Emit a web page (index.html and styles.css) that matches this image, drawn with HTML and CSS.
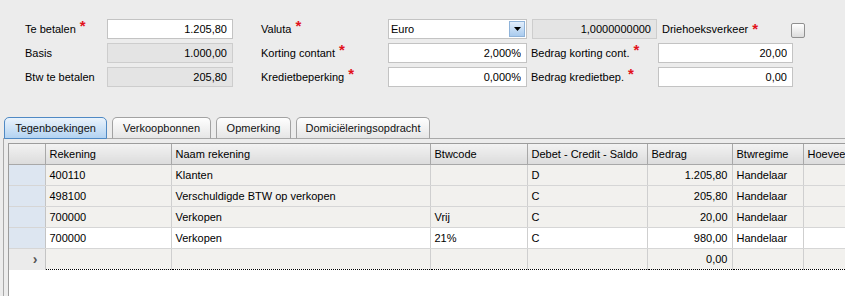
FILE: index.html
```html
<!DOCTYPE html>
<html lang="nl">
<head>
  <meta charset="UTF-8" />
  <title>Verkoopfactuur - Betaling</title>
  <link rel="stylesheet" href="styles.css">
</head>
<body>
  <div class="form">
    <label class="c1">Te betalen <span class="req">*</span></label>
    <input class="c2" type="text" value="1.205,80" />
    <label class="c4">Valuta <span class="req">*</span></label>
    <div class="c5 select">
      <span class="select-text">Euro</span>
      <span class="drop">
        <svg width="7" height="4" viewBox="0 0 7 4"><path d="M0 0H7L3.5 4Z" fill="#000"/></svg>
      </span>
    </div>
    <input class="c7 ro" type="text" value="1,0000000000" readonly />
    <div class="c9 wide">
      <label>Driehoeksverkeer <span class="req">*</span></label>
      <span class="checkbox"></span>
    </div>

    <label class="c1">Basis</label>
    <input class="c2 ro" type="text" value="1.000,00" readonly />
    <label class="c4">Korting contant <span class="req">*</span></label>
    <input class="c5" type="text" value="2,000%" />
    <label class="c7 tight">Bedrag korting cont. <span class="req">*</span></label>
    <input class="c9" type="text" value="20,00" />

    <label class="c1">Btw te betalen</label>
    <input class="c2 ro" type="text" value="205,80" readonly />
    <label class="c4">Kredietbeperking <span class="req">*</span></label>
    <input class="c5" type="text" value="0,000%" />
    <label class="c7 tight">Bedrag kredietbep. <span class="req">*</span></label>
    <input class="c9" type="text" value="0,00" />
  </div>

  <div class="tabs">
    <div class="tab active t1">Tegenboekingen</div>
    <div class="tab t2">Verkoopbonnen</div>
    <div class="tab t3">Opmerking</div>
    <div class="tab t4">Domiciëleringsopdracht</div>
  </div>

  <div class="panel">
    <div class="grid">
      <table>
        <colgroup>
          <col style="width:36px"><col style="width:126px"><col style="width:259px"><col style="width:97px">
          <col style="width:120px"><col style="width:85px"><col style="width:71px"><col style="width:80px">
        </colgroup>
        <thead>
          <tr>
            <th class="rowhead"></th>
            <th>Rekening</th>
            <th>Naam rekening</th>
            <th>Btwcode</th>
            <th>Debet - Credit - Saldo</th>
            <th>Bedrag</th>
            <th>Btwregime</th>
            <th>Hoeveelheid</th>
          </tr>
        </thead>
        <tbody>
          <tr>
            <td class="rowhead"></td>
            <td>400110</td><td>Klanten</td><td></td><td>D</td>
            <td class="num">1.205,80</td><td>Handelaar</td><td></td>
          </tr>
          <tr>
            <td class="rowhead"></td>
            <td>498100</td><td>Verschuldigde BTW op verkopen</td><td></td><td>C</td>
            <td class="num">205,80</td><td>Handelaar</td><td></td>
          </tr>
          <tr>
            <td class="rowhead"></td>
            <td>700000</td><td>Verkopen</td><td>Vrij</td><td>C</td>
            <td class="num">20,00</td><td>Handelaar</td><td></td>
          </tr>
          <tr class="current">
            <td class="rowhead"></td>
            <td>700000</td><td>Verkopen</td><td>21%</td><td>C</td>
            <td class="num">980,00</td><td>Handelaar</td><td></td>
          </tr>
          <tr class="newrow">
            <td class="rowhead">&#x203A;</td>
            <td></td><td></td><td></td><td></td>
            <td class="num">0,00</td><td></td><td></td>
          </tr>
        </tbody>
      </table>
    </div>
  </div>
</body>
</html>
```

FILE: styles.css
```css
html, body {
  margin: 0;
  height: 296px;
  overflow: hidden;
}
body {
  font-family: 'Liberation Sans', Arial, sans-serif;
  font-size: 11px;
  color: #000;
  background: #ececec;
  display: flex;
  flex-direction: column;
}

/* bovenste formulier */
.form {
  display: grid;
  grid-template-columns: 82px 126px 28px 127px 139px 5px 125px 1px 135px 12px;
  grid-auto-rows: 20px;
  row-gap: 4px;
  padding: 19px 0 0 25px;
}
.form label {
  display: flex;
  align-items: center;
  white-space: nowrap;
}
.c1 { grid-column: 1; }
.c2 { grid-column: 2; }
.c4 { grid-column: 4; }
.c5 { grid-column: 5; }
.c7 { grid-column: 7; }
.c9 { grid-column: 9; }
.tight { margin-left: -1px; }
.req {
  color: #e2121b;
  font-size: 15px;
  font-weight: bold;
  margin-left: 4px;
  align-self: flex-start;
  line-height: 14px;
}
input[type="text"] {
  box-sizing: border-box;
  height: 20px;
  width: 100%;
  margin: 0;
  border: 1px solid #c3c3c3;
  background: #fff;
  font-family: inherit;
  font-size: 11px;
  text-align: right;
  padding: 0 5px 0 2px;
  color: #000;
}
input.ro {
  background: #e4e4e4;
  border-color: #cdcdcd;
}
.select {
  box-sizing: border-box;
  height: 20px;
  border: 1px solid #c3c3c3;
  background: #fff;
  display: flex;
  align-items: center;
}
.select-text {
  flex: 1;
  padding-left: 2px;
}
.drop {
  width: 16px;
  height: 16px;
  margin-right: 1px;
  box-sizing: border-box;
  border: 1px solid #8fb3d9;
  background: linear-gradient(#e2eefb, #a9cbee);
  display: flex;
  align-items: center;
  justify-content: center;
}
.wide {
  grid-column: 9 / span 2;
  display: flex;
  align-items: center;
  justify-content: space-between;
  padding-left: 4px;
}
.checkbox {
  width: 12px;
  height: 13px;
  border: 1px solid #909090;
  border-radius: 2px;
  background: linear-gradient(#ffffff, #dcdcdc);
  margin-top: 2px;
}

/* tabbladen */
.tabs {
  display: flex;
  gap: 5px;
  margin: 30px 0 0 4px;
  position: relative;
  z-index: 1;
}
.tab {
  box-sizing: border-box;
  height: 22px;
  line-height: 20px;
  text-align: center;
  border: 1px solid #a2a2a2;
  border-bottom-color: #a9a9a9;
  border-radius: 5px 5px 0 0;
  background: linear-gradient(#fefefe, #e6e6e6);
  color: #111;
}
.t1 { width: 103px; }
.t2 { width: 99px; }
.t3 { width: 75px; }
.t4 { width: 134px; }
.tab.active {
  border-color: #4f89c4;
  background: linear-gradient(#eaf3fc, #b3d3f2);
}

/* raster */
.panel {
  flex: 1;
  margin: -1px 0 0 3px;
  border-top: 1px solid #a9a9a9;
  border-left: 1px solid #a9a9a9;
  padding: 4px 0 0 4px;
  display: flex;
  min-height: 0;
}
.grid {
  flex: 1;
  background: #fff;
  border-top: 1px solid #9c9c9c;
  border-left: 1px solid #9c9c9c;
  overflow: hidden;
}
table {
  border-collapse: collapse;
  table-layout: fixed;
  width: 874px;
}
th, td {
  height: 20px;
  padding: 0 4px;
  text-align: left;
  font-weight: normal;
  white-space: nowrap;
  overflow: hidden;
  border-right: 1px solid #cfcfcf;
  border-bottom: 1px solid #d6d6d6;
}
th {
  background: linear-gradient(#f2f2f2, #dcdcdc);
  border-right-color: #a8a8a8;
  border-bottom-color: #a8a8a8;
}
td {
  background: #f2f1ee;
}
td.num { text-align: right; }
td.rowhead {
  background: #dde6f1;
  border-right-color: #c4c4c4;
}
tr.current td { background: #fff; }
tr.current td.rowhead { background: #dde6f1; }
tr.newrow td {
  background: #f2f1ee;
  border-top: 1px dotted #000;
  border-bottom: 1px dotted #000;
}
tr.newrow td.rowhead {
  background: #ebebeb;
  border-top: 1px solid #d6d6d6;
  border-bottom: none;
  text-align: right;
  padding-right: 7px;
  font-size: 14px;
  color: #555;
  font-weight: bold;
}
tr.newrow td:nth-child(2) { border-left: 1px dotted #000; }
```
